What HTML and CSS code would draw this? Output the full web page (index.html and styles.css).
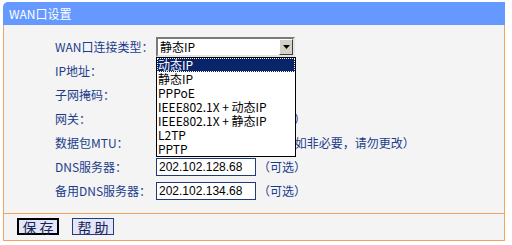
FILE: index.html
```html
<!DOCTYPE html>
<html lang="zh-CN">

<head>
    <meta charset="UTF-8">
    <title>WAN口设置</title>
    <link rel="stylesheet" href="styles.css">
</head>

<body>
    <div class="panel">
        <div class="title">WAN口设置</div>

        <div class="form">
            <!-- connection type, list opened -->
            <div class="row">
                <span class="label">WAN口连接类型：</span>
                <div class="select-wrap">
                    <div class="select">
                        <span class="select-text">静态IP</span>
                        <span class="select-btn">
                            <svg width="7" height="4" viewBox="0 0 7 4"><path d="M0 0h7L3.5 4z" fill="#000"/></svg>
                        </span>
                    </div>
                    <ul class="options">
                        <li class="active">动态IP</li>
                        <li>静态IP</li>
                        <li>PPPoE</li>
                        <li>IEEE802.1X + 动态IP</li>
                        <li>IEEE802.1X + 静态IP</li>
                        <li>L2TP</li>
                        <li>PPTP</li>
                    </ul>
                </div>
            </div>

            <!-- these rows sit under the open list -->
            <div class="row">
                <span class="label">IP地址：</span>
                <input class="text" type="text" value="">
            </div>
            <div class="row">
                <span class="label">子网掩码：</span>
                <input class="text" type="text" value="">
            </div>
            <div class="row">
                <span class="label">网关：</span>
                <input class="text" type="text" value="">
                <span class="hint">（可选）</span>
            </div>
            <div class="row">
                <span class="label">数据包MTU：</span>
                <input class="text short" type="text" value="">
                <span class="hint">（缺省值为1500，如非必要，请勿更改）</span>
            </div>
            <div class="row">
                <span class="label">DNS服务器：</span>
                <input class="text" type="text" value="202.102.128.68">
                <span class="hint">（可选）</span>
            </div>
            <div class="row">
                <span class="label">备用DNS服务器：</span>
                <input class="text" type="text" value="202.102.134.68">
                <span class="hint">（可选）</span>
            </div>
        </div>

        <div class="actions">
            <button class="btn focused">保 存</button>
            <button class="btn">帮 助</button>
        </div>
    </div>
</body>

</html>
```

FILE: styles.css
```css
body {
    margin: 0;
    background: #fff;
    font-family: "Noto Sans CJK SC", sans-serif;
    font-size: 12px;
}

.panel {
    width: 502px;
    margin: 2px 0 0 3px;
}

.title {
    height: 23px;
    line-height: 23px;
    padding-left: 6px;
    color: #fff;
    background-color: #6699ff;
    border-top-left-radius: 5px;
}

.form {
    padding: 10px 0 10px 51px;
    background-color: #f4f4f4;
    border-left: 1px solid #f0a460;
    border-right: 1px solid #f0a460;
}

.row {
    display: flex;
    align-items: center;
    height: 24px;
}

.label {
    width: 101px;
    color: #1b3c8c;
    line-height: 14px;
}

.hint {
    margin-left: 2px;
    color: #1b3c8c;
    line-height: 14px;
}

.text {
    box-sizing: border-box;
    width: 100px;
    height: 18px;
    margin: 0;
    padding: 0 2px;
    border: 1px solid #1e3a78;
    background: #fff;
    font-family: "Liberation Sans", sans-serif;
    font-size: 12px;
    color: #000;
}

.text.short {
    width: 38px;
}

.select-wrap {
    position: relative;
}

.select {
    box-sizing: border-box;
    display: flex;
    align-items: center;
    width: 139px;
    height: 20px;
    border: 2px solid;
    border-color: #7a7a7a #e4e4e4 #e4e4e4 #7a7a7a;
    background: #fff;
}

.select-text {
    flex: 1;
    padding-left: 2px;
    line-height: 14px;
}

.select-btn {
    box-sizing: border-box;
    display: flex;
    align-items: center;
    justify-content: center;
    width: 14px;
    height: 16px;
    background: #d4d0c8;
    border: 1px solid;
    border-color: #fff #404040 #404040 #fff;
}

.options {
    position: absolute;
    top: 20px;
    left: 0;
    width: 140px;
    margin: 0;
    padding: 0;
    list-style: none;
    background: #fff;
    border: 1px solid #000;
    box-sizing: border-box;
}

.options li {
    height: 14px;
    line-height: 14px;
    padding-left: 1px;
    color: #000;
    white-space: nowrap;
}

.options li.active {
    background-color: #0a246a;
    color: #fff;
    outline: 1px dotted #fff;
    outline-offset: -1px;
}

.actions {
    display: flex;
    gap: 13px;
    height: 28px;
    padding: 4px 0 0 13px;
    box-sizing: border-box;
    background-color: #f4f4f4;
    border: 1px solid #f0a460;
}

.btn {
    box-sizing: border-box;
    width: 42px;
    height: 17px;
    padding: 0;
    font-family: "Noto Sans CJK SC", sans-serif;
    font-size: 14px;
    line-height: 12px;
    color: #1a2450;
    background-color: #e2e6fa;
    border: 1px solid #2a3a78;
}

.btn.focused {
    border: 2px solid #000;
}
```
